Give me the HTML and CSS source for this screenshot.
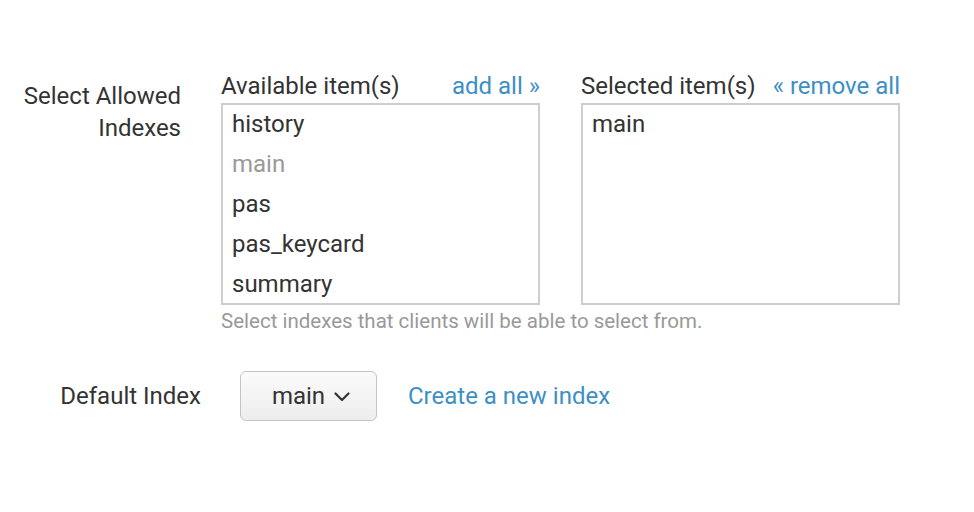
FILE: index.html
```html
<!DOCTYPE html>
<html>
<head>
<meta charset="utf-8">
<link rel="stylesheet" href="styles.css">
</head>
<body>
<div class="form">
  <div class="row-indexes">
    <div class="label label-indexes">Select Allowed<br>Indexes</div>
    <div class="field">
      <div class="lists">
        <div class="col">
          <div class="col-head"><span>Available item(s)</span><a class="link">add all »</a></div>
          <div class="box">
            <div class="item">history</div>
            <div class="item disabled">main</div>
            <div class="item">pas</div>
            <div class="item">pas_keycard</div>
            <div class="item">summary</div>
          </div>
        </div>
        <div class="col">
          <div class="col-head"><span>Selected item(s)</span><a class="link">« remove all</a></div>
          <div class="box">
            <div class="item">main</div>
          </div>
        </div>
      </div>
      <div class="help">Select indexes that clients will be able to select from.</div>
    </div>
  </div>
  <div class="row-default">
    <div class="label label-default">Default Index</div>
    <button class="dropdown">main<svg class="chev" width="16" height="10" viewBox="0 0 16 10"><path d="M1.5 1.5 L8 8 L14.5 1.5" fill="none" stroke="#333" stroke-width="2.2" stroke-linecap="round" stroke-linejoin="round"/></svg></button>
    <a class="link create">Create a new index</a>
  </div>
</div>
</body>
</html>
```

FILE: styles.css
```css
* { box-sizing: border-box; }
body {
  margin: 0;
  font-family: Roboto, "Liberation Sans", sans-serif;
  color: #333;
  background: #fff;
}
.form {
  padding-top: 70px;
}
.row-indexes {
  display: flex;
  gap: 40px;
}
.label {
  font-size: 24px;
  line-height: 32px;
  text-align: right;
}
.label-indexes {
  width: 181px;
  padding-top: 10px;
}
.lists {
  display: flex;
  gap: 41px;
}
.col {
  width: 319px;
}
.col-head {
  display: flex;
  justify-content: space-between;
  font-size: 24px;
  line-height: 32px;
  height: 33px;
}
.link {
  color: #3d8fc6;
  cursor: pointer;
}
.box {
  height: 202px;
  border: 2px solid #cecece;
  padding: 0 9px;
  overflow: hidden;
}
.item {
  font-size: 24px;
  line-height: 40px;
}
.item:first-child {
  margin-top: -1px;
}
.item.disabled {
  color: #999;
}
.help {
  margin-top: 4px;
  font-size: 20.5px;
  line-height: 24px;
  color: #999;
}
.row-default {
  display: flex;
  align-items: center;
  margin-top: 38px;
}
.label-default {
  width: 201px;
}
.dropdown {
  margin-left: 39px;
  width: 137px;
  height: 50px;
  border: 1px solid #c4c4c4;
  border-radius: 6px;
  background: linear-gradient(#fbfbfb, #ededed);
  font-family: Roboto, "Liberation Sans", sans-serif;
  font-size: 24px;
  color: #333;
  display: flex;
  align-items: center;
  justify-content: center;
  gap: 9px;
  padding: 0 0 0 5px;
}
.chev {
  display: block;
  margin-top: 2px;
}
.create {
  margin-left: 31px;
  font-size: 24px;
  line-height: 32px;
}
```
